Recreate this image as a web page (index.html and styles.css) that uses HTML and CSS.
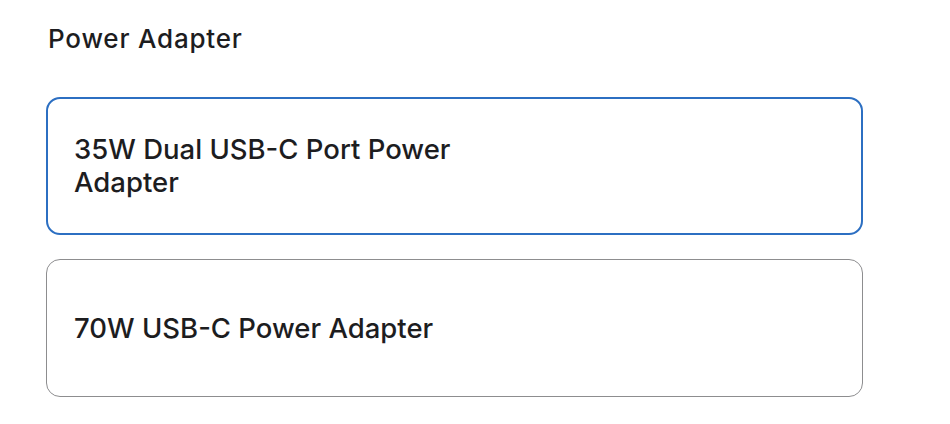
FILE: index.html
```html
<!DOCTYPE html>
<html lang="en">
<head>
<meta charset="utf-8">
<title>Power Adapter</title>
<link rel="stylesheet" href="styles.css">
</head>
<body>
<section class="picker">
  <h2 class="picker-title">Power Adapter</h2>
  <div class="options">
    <div class="option option-selected">
      <span class="option-label">35W Dual USB-C Port Power Adapter</span>
    </div>
    <div class="option">
      <span class="option-label">70W USB-C Power Adapter</span>
    </div>
  </div>
</section>
</body>
</html>
```
FILE: styles.css
```css
html, body {
  margin: 0;
  padding: 0;
  background: #ffffff;
}
body {
  font-family: Inter, "Noto Sans", sans-serif;
  color: #1d1d1f;
}
.picker {
  width: 817px;
  padding: 22px 0 0 46px;
}
.picker-title {
  margin: 0 0 0 2px;
  font-size: 26px;
  font-weight: 500;
  line-height: 34px;
  letter-spacing: 0.8px;
}
.options {
  margin-top: 41px;
  display: flex;
  flex-direction: column;
  gap: 24px;
}
.option {
  box-sizing: border-box;
  height: 138px;
  border: 1px solid #8d8d8f;
  border-radius: 14px;
  padding: 0 27px;
  display: flex;
  align-items: center;
}
.option-selected {
  border: 2px solid #2c6fc2;
  padding: 0 26px;
}
.option-label {
  max-width: 400px;
  font-size: 27.5px;
  font-weight: 500;
  line-height: 33px;
}
```
